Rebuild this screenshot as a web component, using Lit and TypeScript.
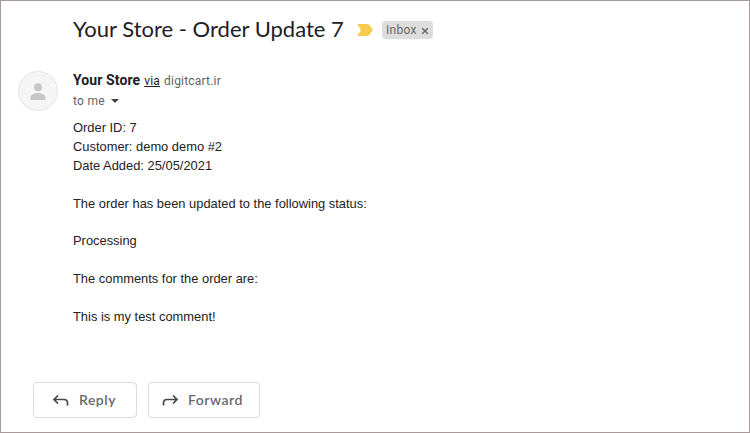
import { LitElement, html, css, svg } from "lit";
import { customElement, property } from "lit/decorators.js";

@customElement("mail-action")
class MailAction extends LitElement {
  @property() label = "";
  @property() direction = "reply";

  static styles = css`
    :host { display: block; }
    .button {
      display: flex;
      align-items: center;
      box-sizing: border-box;
      width: 104px;
      height: 36px;
      margin: 0;
      padding: 0 0 1px 18px;
      gap: 9px;
      border: 1px solid #dadce0;
      border-radius: 4px;
      background: #fff;
      color: #666a6f;
      font: 600 14px/20px Lato, sans-serif;
      letter-spacing: 0.5px;
    }
    .forward { width: 112px; padding-left: 12px; }
    .icon { width: 18px; height: 18px; flex: none; }
  `;

  render() {
    const forward = this.direction === "forward";
    return html`<button class="button ${forward ? "forward" : ""}">
      <svg class="icon" viewBox="0 0 18 18" fill="none" stroke="#444746" stroke-width="1.7">
        ${forward
          ? svg`<path d="M2.500 14.500V12Q2.500 8.500 6 8.500H16M12 4.500L16 8.500L12 12.500" />`
          : svg`<path d="M15.500 14.500V12Q15.500 8.500 12 8.500H2M6 4.500L2 8.500L6 12.500" />`}
      </svg>
      <span>${this.label}</span>
    </button>`;
  }
}

@customElement("app-root")
class AppRoot extends LitElement {
  static styles = css`
    :host {
      display: block;
      box-sizing: border-box;
      height: 433px;
      border: 1px solid #a8999b;
      background: #fff;
      color: #222;
      font-family: Roboto, sans-serif;
      overflow: hidden;
    }
    .subject {
      display: flex;
      align-items: center;
      height: 28px;
      padding: 14px 0 0 72px;
    }
    .title {
      width: 284px;
      margin: 0;
      font: 400 22px/28px Lato, sans-serif;
      letter-spacing: 0;
      color: #202124;
      white-space: nowrap;
    }
    .marker { width: 16px; height: 12px; margin-top: 2px; flex: none; }
    .label {
      display: flex;
      align-items: center;
      box-sizing: border-box;
      width: 51px;
      height: 18px;
      margin: 2px 0 0 9px;
      padding-left: 4px;
      gap: 4px;
      border-radius: 4px;
      background: #ddd;
      color: #666;
      font-size: 12px;
      letter-spacing: 0.3px;
    }
    .cross { width: 8px; height: 8px; margin-top: 1px; }
    .sender { display: flex; padding: 28px 0 0 17px; }
    .avatar { width: 40px; height: 40px; flex: none; }
    .names { padding-left: 15px; }
    .from {
      display: flex;
      align-items: baseline;
      height: 20px;
      gap: 4px;
      margin-top: -1px;
      line-height: 20px;
      font-size: 12px;
      letter-spacing: 0.2px;
      color: #5f6368;
    }
    .name {
      font-size: 14px;
      font-weight: 700;
      letter-spacing: 0.1px;
      color: #202124;
    }
    .via { color: #222; text-decoration: underline; }
    .to {
      display: flex;
      align-items: center;
      height: 20px;
      gap: 6px;
      margin-top: 1px;
      font-size: 12px;
      letter-spacing: 0.3px;
      color: #5f6368;
    }
    .caret { width: 8px; height: 4px; }
    .message {
      height: 271px;
      padding: 8.300px 0 0 72px;
      box-sizing: border-box;
      font: 12.900px/18.860px "Liberation Sans", Arial, sans-serif;
      white-space: pre-line;
    }
    .actions { display: flex; gap: 11px; padding-left: 32px; }
  `;

  render() {
    const lines = [
      "Order ID: 7",
      "Customer: demo demo #2",
      "Date Added: 25/05/2021",
      "",
      "The order has been updated to the following status:",
      "",
      "Processing",
      "",
      "The comments for the order are:",
      "",
      "This is my test comment!",
    ];
    return html`
      <header class="subject">
        <h1 class="title">Your Store - Order Update 7</h1>
        <svg class="marker" viewBox="0 0 16 12"><path fill="#f7cb4d" d="M0 0H10.5Q11.3 0 12 .8L16 6L12 11.2Q11.3 12 10.5 12H0L4 6Z" /></svg>
        <div class="label">
          <span>Inbox</span>
          <svg class="cross" viewBox="0 0 8 8" stroke="#666" stroke-width="1.4"><path d="M1.2 1.2L6.800 6.800M6.800 1.200L1.200 6.800" /></svg>
        </div>
      </header>
      <section class="sender">
        <svg class="avatar" viewBox="0 0 40 40">
          <circle cx="20" cy="20" r="19.5" fill="#f5f5f5" stroke="#e4e4e4" />
          <circle cx="20" cy="16.2" r="4" fill="#c6c6c6" />
          <path fill="#c6c6c6" d="M12.500 29V26.500C12.500 23.500 17 22 20 22S27.500 23.500 27.500 26.500V29Z" />
        </svg>
        <div class="names">
          <div class="from"><span class="name">Your Store</span><span class="via">via</span><span>digitcart.ir</span></div>
          <div class="to"><span>to me</span><svg class="caret" viewBox="0 0 8 4"><path fill="#444" d="M0 0H8L4 4Z" /></svg></div>
        </div>
      </section>
      <div class="message">${lines.join("\n")}</div>
      <footer class="actions">
        <mail-action label="Reply" direction="reply"></mail-action>
        <mail-action label="Forward" direction="forward"></mail-action>
      </footer>
    `;
  }
}
